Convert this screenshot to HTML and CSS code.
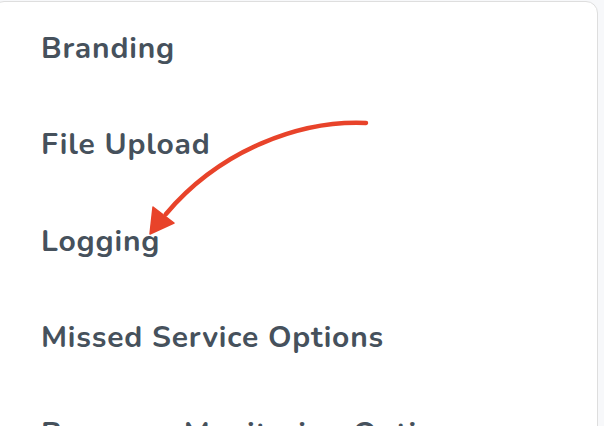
FILE: index.html
```html
<!DOCTYPE html>
<html>
<head>
<meta charset="utf-8">
<link rel="stylesheet" href="styles.css">
</head>
<body>
<div class="card">
  <ul class="menu">
    <li class="item">Branding</li>
    <li class="item">File Upload</li>
    <li class="item">Logging</li>
    <li class="item">Missed Service Options</li>
    <li class="item">Resource Monitoring Options</li>
  </ul>
  <svg class="arrow" width="604" height="426" viewBox="0 0 604 426">
    <path d="M366 123 C300 120 220 150 166 214" fill="none" stroke="#e8432a" stroke-width="4.5" stroke-linecap="round"/>
    <path d="M150 234 L153 207 L174 223 Z" fill="#e8432a" stroke="#e8432a" stroke-width="1.5" stroke-linejoin="round"/>
  </svg>
</div>
</body>
</html>
```
FILE: styles.css
```css
html, body {
  margin: 0;
  padding: 0;
  background: #f7f8fa;
  overflow: hidden;
  height: 426px;
}
.card {
  position: relative;
  margin: 1px 6px 0 -8px;
  height: 500px;
  background: #ffffff;
  border: 1.5px solid #dedede;
  border-radius: 12px;
  box-sizing: border-box;
}
.menu {
  list-style: none;
  margin: 0;
  padding: 27px 0 0 48px;
}
.item {
  height: 96.3px;
  font-family: "Nunito", "Lato", "Noto Sans", sans-serif;
  font-weight: 700;
  font-size: 30px;
  line-height: 40px;
  color: #46515c;
  letter-spacing: 0.8px;
  white-space: nowrap;
}
.arrow {
  position: absolute;
  left: 6.5px;
  top: -2.5px;
}
```
